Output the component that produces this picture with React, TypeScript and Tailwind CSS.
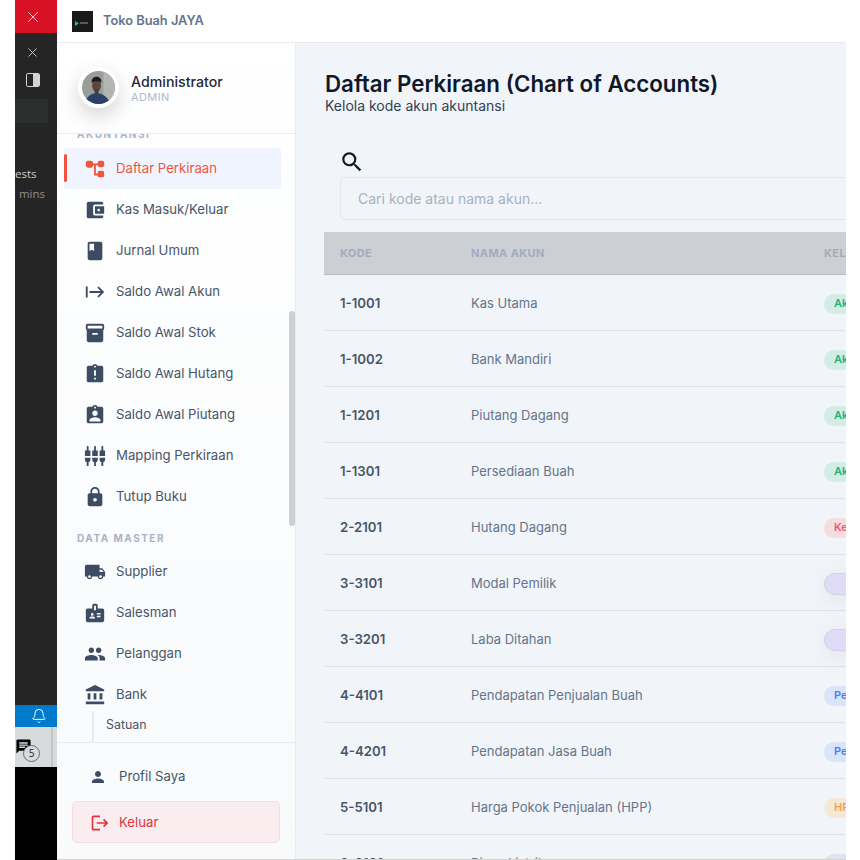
import { MdAccountBalanceWallet, MdBook, MdStart, MdInventory2, MdAssignmentLate, MdAssignmentInd, MdSettingsInputComponent, MdLock, MdLocalShipping, MdBadge, MdPeople, MdAccountBalance, MdPerson, MdLogout, MdSearch, MdChat } from 'react-icons/md';
import { X, Bell } from 'lucide-react';
import type { ComponentType } from 'react';

interface NavEntry {
  label: string;
  icon: ComponentType<{ className?: string }>;
  active?: boolean;
}

// rounded variant of account_tree, the icon pack only has the square one
function TreeIcon({ className }: { className?: string }) {
  return (
    <svg viewBox="0 0 24 24" fill="currentColor" className={className}>
      <rect x="2" y="3" width="8" height="7.5" rx="2.5" />
      <rect x="15" y="3" width="7" height="7" rx="2" />
      <rect x="15" y="14" width="7" height="7" rx="2" />
      <path d="M9 6h7v2h-3v9h3v2h-5V8H9z" />
    </svg>
  );
}

const AKUNTANSI: NavEntry[] = [
  { label: 'Daftar Perkiraan', icon: TreeIcon, active: true },
  { label: 'Kas Masuk/Keluar', icon: MdAccountBalanceWallet },
  { label: 'Jurnal Umum', icon: MdBook },
  { label: 'Saldo Awal Akun', icon: MdStart },
  { label: 'Saldo Awal Stok', icon: MdInventory2 },
  { label: 'Saldo Awal Hutang', icon: MdAssignmentLate },
  { label: 'Saldo Awal Piutang', icon: MdAssignmentInd },
  { label: 'Mapping Perkiraan', icon: MdSettingsInputComponent },
  { label: 'Tutup Buku', icon: MdLock },
];

const DATA_MASTER: NavEntry[] = [
  { label: 'Supplier', icon: MdLocalShipping },
  { label: 'Salesman', icon: MdBadge },
  { label: 'Pelanggan', icon: MdPeople },
  { label: 'Bank', icon: MdAccountBalance },
];

const GREEN = 'h-[20px] bg-[#d1ede5] text-[#22b07d]';
const PURPLE = 'h-[22px] bg-[#e0dcf8] border border-[#d3cfe8] shadow-[0_4px_24px_rgba(0,0,0,0.07)]';
const BLUE = 'h-[20px] bg-[#d9e4fb] text-[#4f7cf0]';

const ROWS = [
  { code: '1-1001', name: 'Kas Utama', tag: 'Aktiva', cls: GREEN },
  { code: '1-1002', name: 'Bank Mandiri', tag: 'Aktiva', cls: GREEN },
  { code: '1-1201', name: 'Piutang Dagang', tag: 'Aktiva', cls: GREEN },
  { code: '1-1301', name: 'Persediaan Buah', tag: 'Aktiva', cls: GREEN },
  { code: '2-2101', name: 'Hutang Dagang', tag: 'Kewajiban', cls: 'h-[20px] bg-[#f5dce0] text-[#ef5a6a]' },
  { code: '3-3101', name: 'Modal Pemilik', tag: '', cls: PURPLE },
  { code: '3-3201', name: 'Laba Ditahan', tag: '', cls: PURPLE },
  { code: '4-4101', name: 'Pendapatan Penjualan Buah', tag: 'Pendapatan', cls: BLUE },
  { code: '4-4201', name: 'Pendapatan Jasa Buah', tag: 'Pendapatan', cls: BLUE },
  { code: '5-5101', name: 'Harga Pokok Penjualan (HPP)', tag: 'HPP', cls: 'h-[20px] bg-[#f5e9d6] text-[#f5a04c]' },
  { code: '6-6101', name: 'Biaya Listrik', tag: 'Beban', cls: 'h-[20px] bg-[#dfe3ec] text-[#64748b]' },
];

function NavItem({ item }: { item: NavEntry }) {
  const Icon = item.icon;
  return (
    <div
      className={`relative flex h-[41px] items-center rounded-[3px] pl-5 text-[13.2px] ${
        item.active ? 'bg-[#f0f4fe] text-[#f2553d]' : 'text-[#475569]'
      }`}
    >
      {item.active && <span className="absolute left-0 top-[6px] h-[28px] w-[3px] rounded-full bg-[#f2553d]" />}
      <Icon className={`h-[22px] w-[22px] ${item.active ? 'text-[#f2553d]' : 'text-[#3e4c63]'}`} />
      <span className="ml-[10px]">{item.label}</span>
    </div>
  );
}

function SideStrip() {
  return (
    <div className="flex h-full w-[42px] shrink-0 flex-col overflow-hidden bg-[#252526] font-['Open_Sans',sans-serif]">
      <div className="flex h-[33px] items-center justify-end bg-[#d91125] pr-[15px]">
        <X className="h-[18px] w-[18px] text-[#f5d5d8]" strokeWidth={1.25} />
      </div>
      <div className="flex h-[38px] items-center justify-end pr-[17px]">
        <X className="h-[15px] w-[15px] text-[#cccccc]" strokeWidth={1.5} />
      </div>
      <div className="flex h-[18px] items-center justify-end pr-[17px]">
        <span className="flex h-[14px] w-[14px] overflow-hidden rounded-[2px] border border-[#d4d4d4]">
          <span className="w-1/2 bg-[#252526]" />
          <span className="w-1/2 bg-[#d4d4d4]" />
        </span>
      </div>
      <div className="mt-[10px] h-[24px] w-[33px] rounded-r-[2px] bg-[#2c2f30]" />
      <div className="mt-[42px] text-[11.5px] leading-[18px] text-[#cccccc]">ests</div>
      <div className="mt-[2px] flex justify-end pr-[12px] text-[11.5px] leading-[18px] text-[#8f8f8f]">
        <span className="-ml-[10px] whitespace-nowrap">2 mins</span>
      </div>
      <div className="flex-1" />
      <div className="flex h-[22px] items-center justify-end bg-[#007acc] pr-[10px]">
        <Bell className="h-[16px] w-[16px] text-white" strokeWidth={1.5} />
      </div>
      <div className="relative h-[40px] bg-[#d8dadb]">
        <span className="absolute right-[4px] top-0 h-full w-[2px] bg-[#c2c4c6]" />
        <MdChat className="absolute left-0 top-[11px] h-[17px] w-[17px] text-black" />
        <span className="absolute left-[8px] top-[18px] flex h-[17px] w-[17px] items-center justify-center rounded-full border border-[#6b6b6b] bg-[#d8dadb] text-[10px] text-[#222222]">
          5
        </span>
      </div>
      <div className="h-[93px] bg-black" />
    </div>
  );
}

function Avatar() {
  return (
    <span className="flex h-[41px] w-[41px] shrink-0 items-center justify-center rounded-full bg-white shadow-[0_8px_20px_rgba(15,23,42,0.18)]">
      <svg viewBox="0 0 34 34" className="h-[33px] w-[33px] rounded-full">
        <rect width="34" height="34" fill="#9a9e98" />
        <rect x="22" width="12" height="34" fill="#b3b6b0" />
        <ellipse cx="15" cy="15" rx="4.5" ry="6.5" fill="#5b463c" />
        <path d="M10 12c-1-8 11-8 10 0-3-2-7-2-10 0z" fill="#1c1b1e" />
        <rect x="13" y="19" width="4" height="5" fill="#4d3c34" />
        <path d="M3 34c1-8 7-11 12-11s12 3 14 11z" fill="#2a4068" />
      </svg>
    </span>
  );
}

function Sidebar() {
  return (
    <aside className="flex h-full w-[239px] shrink-0 flex-col border-r border-[#e8ebf0] bg-gradient-to-b from-white to-[#f8fafc]">
      <div className="flex h-[91px] shrink-0 items-center gap-[12px] border-b border-[#e8ebf0] pl-[21px] pb-[1px]">
        <Avatar />
        <div>
          <div className="text-[14.2px] font-medium leading-[17px] text-[#1e293b]">Administrator</div>
          <div className="pt-[1px] text-[11px] leading-[12px] tracking-[0.4px] text-[#b0b9c9]">ADMIN</div>
        </div>
      </div>
      <div className="relative flex-1 overflow-hidden">
        <div className="-mt-[6px] pl-[7px] pr-[14px]">
          <div className="pl-[13px] text-[10px] font-bold leading-[12px] tracking-[1.5px] text-[#aab3c5]">AKUNTANSI</div>
          <div className="mt-[8px]">
            {AKUNTANSI.map((item) => (
              <NavItem key={item.label} item={item} />
            ))}
          </div>
          <div className="mt-[15px] pl-[13px] text-[10px] font-bold leading-[12px] tracking-[1.5px] text-[#aab3c5]">DATA MASTER</div>
          <div className="mt-[7px]">
            {DATA_MASTER.map((item) => (
              <NavItem key={item.label} item={item} />
            ))}
          </div>
          <div className="ml-[28px] -mt-[4px] h-[40px] border-l-2 border-[#e8ebf0] pl-[12px] pt-[4px] text-[12.4px] leading-[20px] text-[#475569]">Satuan</div>
        </div>
        <span className="absolute right-0 top-[177px] h-[215px] w-[6px] rounded-full bg-[#cdcfd2]" />
      </div>
      <div className="h-[117px] shrink-0 border-t border-[#e8ebf0] px-[15px]">
        <div className="flex h-[58px] items-center pl-[17px] pt-[10px] text-[13.2px] text-[#475569]">
          <MdPerson className="h-[18px] w-[18px] text-[#3e4c63]" />
          <span className="ml-[12px]">Profil Saya</span>
        </div>
        <div className="flex h-[42px] items-center rounded-[5px] border border-[#f8dcdf] bg-[#f9edf0] pl-[17px] pt-[1px] text-[13.2px] text-[#e5333d]">
          <MdLogout className="h-[20px] w-[20px]" />
          <span className="ml-[9px]">Keluar</span>
        </div>
      </div>
    </aside>
  );
}

function AccountRow({ row }: { row: (typeof ROWS)[number] }) {
  return (
    <div className="flex h-[56px] shrink-0 items-center border-b border-[#dfe2e7] pl-[16px] pt-[2px]">
      <div className="w-[131px] text-[13.2px] font-semibold text-[#475569]">{row.code}</div>
      <div className="w-[353px] text-[13px] text-[#64748b]">{row.name}</div>
      <span className={`flex w-[80px] shrink-0 items-center rounded-full pl-[10px] text-[11px] font-semibold ${row.cls}`}>{row.tag}</span>
    </div>
  );
}

function Main() {
  return (
    <main className="flex h-full min-w-0 flex-1 flex-col overflow-hidden bg-[#f1f5f9]">
      <div className="h-[106px] shrink-0 pl-[29px] pt-[27px]">
        <h1 className="text-[22.3px] font-semibold leading-[27px] text-[#0f172a]">Daftar Perkiraan (Chart of Accounts)</h1>
        <p className="text-[14px] leading-[17px] text-[#334155]">Kelola kode akun akuntansi</p>
      </div>
      <div className="ml-[28px] flex-1 overflow-hidden">
        <div className="pl-[16px]">
          <MdSearch className="-ml-[1px] mb-[2px] h-[26px] w-[26px] text-[#0f172a]" />
          <div className="flex h-[43px] w-[600px] items-center rounded-[4px] border border-[#e2e8f0] bg-[#f1f5f9] pl-[17px] text-[14px] text-[#a7b1c2]">
            Cari kode atau nama akun...
          </div>
        </div>
        <div className="mt-[12px] flex h-[43px] w-[600px] items-center border-b border-[#b9bcc2] bg-[#cccfd4] pl-[16px] text-[11px] font-bold tracking-[0.4px] text-[#a3acbd]">
          <span className="w-[131px]">KODE</span>
          <span className="w-[353px]">NAMA AKUN</span>
          <span>KELOMPOK</span>
        </div>
        <div className="flex w-[600px] flex-col">
          {ROWS.map((row) => (
            <AccountRow key={row.code} row={row} />
          ))}
        </div>
      </div>
    </main>
  );
}

export default function App() {
  return (
    <div className="flex h-[860px] w-[860px] overflow-hidden bg-white font-['Inter',sans-serif]">
      <div className="w-[15px] shrink-0" />
      <SideStrip />
      <div className="flex h-[860px] w-[789px] shrink-0 flex-col overflow-hidden border-b border-[#d4d4d4]">
        <header className="flex h-[43px] shrink-0 items-center border-b border-[#e8ebf0] bg-white pl-[15px]">
          <svg viewBox="0 0 21 21" className="h-[21px] w-[21px]">
            <rect width="21" height="21" fill="#1a1a1a" />
            <path d="M3 10l4 2.5L3 15z" fill="#22c55e" />
            <rect x="8" y="11.5" width="8" height="1" fill="#999999" />
          </svg>
          <span className="ml-[10px] text-[12.8px] font-semibold text-[#64748b]">Toko Buah JAYA</span>
        </header>
        <div className="flex min-h-0 flex-1">
          <Sidebar />
          <Main />
        </div>
      </div>
    </div>
  );
}
